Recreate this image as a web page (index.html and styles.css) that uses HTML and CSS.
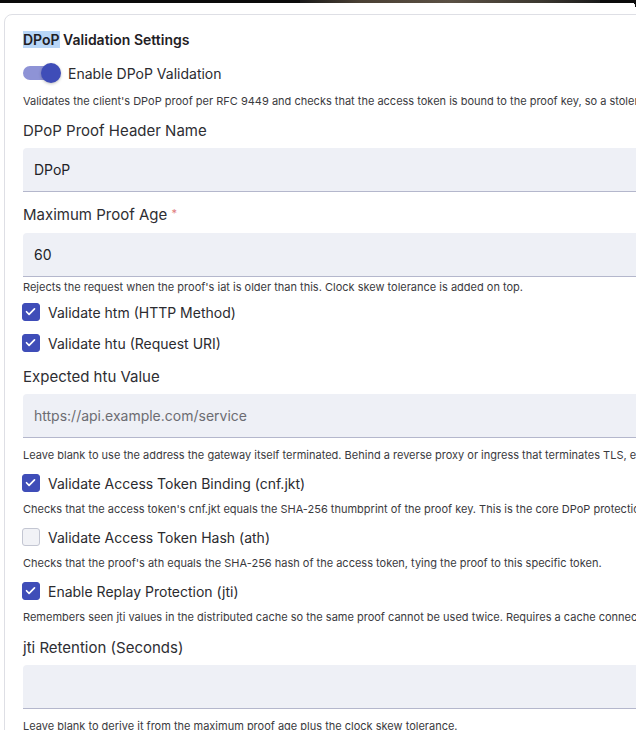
FILE: index.html
```html
<!DOCTYPE html>
<html lang="en">
<head>
<meta charset="utf-8">
<title>DPoP Validation Settings</title>
<link rel="stylesheet" href="styles.css">
</head>
<body>
<div class="topbar"><div class="topbar-photo"></div><div class="topbar-corner"></div></div>
<section class="card">
  <h2 class="title"><span class="sel">DPoP</span> Validation Settings</h2>

  <label class="toggle-row">
    <span class="toggle"><span class="toggle-track"></span><span class="toggle-thumb"></span></span>
    <span class="toggle-label">Enable DPoP Validation</span>
  </label>
  <p class="help help-desc">Validates the client's DPoP proof per RFC 9449 and checks that the access token is bound to the proof key, so a stolen token cannot be replayed by another client.</p>

  <div class="field-label">DPoP Proof Header Name</div>
  <div class="input"><span class="value">DPoP</span></div>

  <div class="field-label field-label-2">Maximum Proof Age <span class="req">*</span></div>
  <div class="input"><span class="value">60</span></div>
  <p class="help help-hint">Rejects the request when the proof's iat is older than this. Clock skew tolerance is added on top.</p>

  <label class="check-row check-first"><span class="box checked"><svg viewBox="0 0 18 18"><path d="M4.2 9.3l3.1 3.1 6.5-6.6"/></svg></span><span class="check-label">Validate htm (HTTP Method)</span></label>
  <label class="check-row check-second"><span class="box checked"><svg viewBox="0 0 18 18"><path d="M4.2 9.3l3.1 3.1 6.5-6.6"/></svg></span><span class="check-label">Validate htu (Request URI)</span></label>

  <div class="field-label field-label-3">Expected htu Value</div>
  <div class="input"><span class="placeholder">https://api.example.com/service</span></div>
  <p class="help help-after">Leave blank to use the address the gateway itself terminated. Behind a reverse proxy or ingress that terminates TLS, enter the public URL clients use.</p>

  <label class="check-row"><span class="box checked"><svg viewBox="0 0 18 18"><path d="M4.2 9.3l3.1 3.1 6.5-6.6"/></svg></span><span class="check-label">Validate Access Token Binding (cnf.jkt)</span></label>
  <p class="help help-check">Checks that the access token's cnf.jkt equals the SHA-256 thumbprint of the proof key. This is the core DPoP protection and should stay enabled.</p>

  <label class="check-row"><span class="box"></span><span class="check-label">Validate Access Token Hash (ath)</span></label>
  <p class="help help-check">Checks that the proof's ath equals the SHA-256 hash of the access token, tying the proof to this specific token.</p>

  <label class="check-row"><span class="box checked"><svg viewBox="0 0 18 18"><path d="M4.2 9.3l3.1 3.1 6.5-6.6"/></svg></span><span class="check-label">Enable Replay Protection (jti)</span></label>
  <p class="help help-check">Remembers seen jti values in the distributed cache so the same proof cannot be used twice. Requires a cache connection to be configured.</p>

  <div class="field-label field-label-4">jti Retention (Seconds)</div>
  <div class="input"></div>
  <p class="help help-after">Leave blank to derive it from the maximum proof age plus the clock skew tolerance.</p>
</section>
</body>
</html>
```

FILE: styles.css
```css
html, body {
  margin: 0;
  padding: 0;
  background: #ffffff;
  overflow: hidden;
  height: 730px;
}
body {
  font-family: Inter, "Noto Sans", "Liberation Sans", sans-serif;
  color: #2b2b2f;
}
.topbar {
  height: 3px;
  background: #0b0b0b;
  position: relative;
}
.topbar-photo {
  margin-left: 300px;
  width: 300px;
  height: 3px;
  background: linear-gradient(90deg, #1a1a1a, #4a4034 20%, #5a5044 50%, #3c3830 80%, #1a1a1a);
}
.topbar-corner {
  position: absolute;
  right: 0;
  top: 0;
  width: 7px;
  height: 7px;
  background: radial-gradient(circle at 0 100%, transparent 6px, #0b0b0b 6.5px);
}
.card {
  margin: 11px 0 0 4px;
  width: 900px;
  border: 1px solid #dedfe5;
  border-radius: 8px;
  padding: 0 18px;
  box-sizing: border-box;
  height: 900px;
}
.title {
  margin: 15px 0 0;
  font-size: 14px;
  line-height: 20px;
  font-weight: 600;
  color: #1f2024;
}
.sel {
  background: #b8d6f7;
}
.toggle-row {
  display: flex;
  align-items: center;
  height: 24px;
  margin-top: 11px;
}
.toggle {
  position: relative;
  width: 38px;
  height: 24px;
  flex: none;
}
.toggle-track {
  position: absolute;
  left: 0;
  top: 5px;
  width: 36px;
  height: 14px;
  border-radius: 7px;
  background: #8e93d6;
}
.toggle-thumb {
  position: absolute;
  left: 18px;
  top: 2px;
  width: 20px;
  height: 20px;
  border-radius: 50%;
  background: #3f4db8;
  box-shadow: 0 1px 3px rgba(0,0,0,0.25);
}
.toggle-label {
  margin-left: 7px;
  font-size: 14px;
  color: #2b2b2f;
}
.help {
  margin: 0;
  font-size: 11px;
  line-height: 14px;
  color: #3a3a3e;
  white-space: nowrap;
}
.help-desc { margin-top: 9px; }
.help-hint { margin-top: 3px; }
.help-after { margin-top: 10px; }
.help-check { margin-top: 9px; }
.field-label {
  font-size: 15px;
  line-height: 20px;
  color: #2e2e33;
  margin-top: 13px;
}
.field-label-2 { margin-top: 11px; }
.field-label-3 { margin-top: 14px; }
.field-label-4 { margin-top: 14px; }
.req {
  color: #e07a7a;
  font-size: 11px;
  vertical-align: 3px;
}
.input {
  margin-top: 7px;
  height: 44px;
  box-sizing: border-box;
  background: #eef0f6;
  border-bottom: 1px solid #b4b7cc;
  border-radius: 4px 4px 0 0;
  display: flex;
  align-items: center;
  padding: 0 11px;
  font-size: 14px;
}
.field-label-2 + .input { margin-top: 8px; }
.value { color: #222226; }
.placeholder { color: #6c6c72; }
.check-row {
  display: flex;
  align-items: center;
  height: 20px;
  margin-top: 11px;
}
.check-first { margin-top: 8px; }
.check-second { margin-top: 11px; }
.box {
  width: 18px;
  height: 18px;
  box-sizing: border-box;
  border-radius: 3px;
  border: 1.5px solid #c3c6d2;
  background: #f1f2f6;
  flex: none;
  margin-left: -1px;
  display: flex;
}
.box.checked {
  background: #3f4db8;
  border-color: #3f4db8;
}
.box svg {
  width: 15px;
  height: 15px;
  fill: none;
  stroke: #ffffff;
  stroke-width: 2;
  stroke-linecap: round;
  stroke-linejoin: round;
}
.check-label {
  margin-left: 8px;
  font-size: 14px;
  color: #2b2b2f;
}
```
